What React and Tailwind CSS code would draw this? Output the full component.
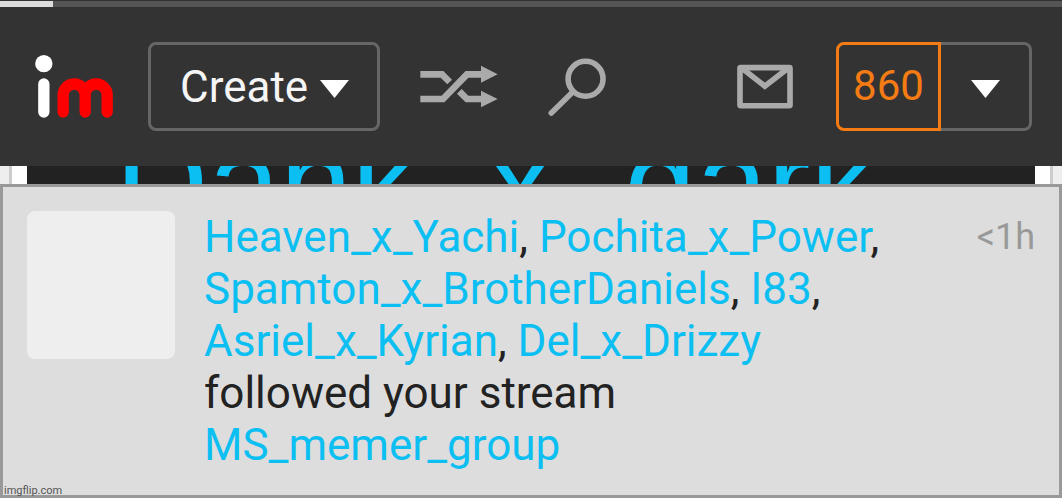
import React from 'react';

const Logo = () => (
  <svg viewBox="44 44 233 189" className="w-[78px] h-[63px]" fill="none" strokeWidth="34" strokeLinecap="round">
    <circle cx="70" cy="70" r="26" fill="#fff" />
    <path d="M70 131V215" stroke="#fff" />
    <path d="M128 215V164a33 33 0 0 1 66 0V215M194 164a33 33 0 0 1 66 0V215" stroke="#f00" />
  </svg>
);

const ShuffleIcon = () => (
  <svg viewBox="61 105 234 129" className="w-[78px] h-[43px]" fill="none" stroke="#aaa" strokeWidth="20">
    <path d="M62 133H127L150 156" />
    <path d="M62 207H130L202 133H245" />
    <path d="M179 184L202 207H245" />
    <path d="M244 107L294 133L244 158ZM244 182L294 207L244 232Z" fill="#aaa" stroke="none" />
  </svg>
);

const SearchIcon = () => (
  <svg viewBox="442 83 176 176" className="w-[58px] h-[58px]" fill="none" stroke="#aaa" strokeWidth="17">
    <circle cx="556" cy="146" r="53" />
    <path d="M517 186L452 250" strokeLinecap="round" />
  </svg>
);

const MailIcon = () => (
  <svg viewBox="111 193 169 134" className="w-14 h-[45px]" fill="none" stroke="#aaa" strokeWidth="17">
    <rect x="120" y="203" width="151" height="115" rx="2" />
    <path d="M130 208L195 259L261 208" />
  </svg>
);

const Caret = () => (
  <svg viewBox="0 0 29 18" className="w-[29px] h-[18px] mt-1" fill="#fff">
    <path d="M0 0H29L14.5 18Z" />
  </svg>
);

const Header = () => (
  <header className="bg-[#333]">
    <div className="h-[7px] bg-[#555] border-t border-[#333]">
      <div className="w-1/20 h-full bg-[#ddd]" />
    </div>
    <nav className="flex items-center pl-[35px] pr-[30px] py-[35px]">
      <a href="#home" aria-label="Home"><Logo /></a>
      <button className="ml-[35px] h-[89px] pl-[29px] pr-7 flex items-center gap-3 border-3 border-[#666] rounded-lg text-[44px] text-[#f5f5f5]">
        Create
        <Caret />
      </button>
      <button aria-label="Random" className="ml-10"><ShuffleIcon /></button>
      <button aria-label="Search" className="ml-[50px]"><SearchIcon /></button>
      <button aria-label="Messages" className="ml-auto"><MailIcon /></button>
      <div className="ml-[43px] h-[89px] flex">
        <button className="w-[105px] pb-0.5 border-3 border-[#f57c14] rounded-l-lg text-[42px] text-[#f57c14]">860</button>
        <button aria-label="Account menu" className="w-[91px] flex items-center justify-center border-3 border-l-0 border-[#666] rounded-r-lg">
          <Caret />
        </button>
      </div>
    </nav>
  </header>
);

const StreamTitle = () => (
  <div className="h-[18px] flex overflow-hidden bg-[#eee] px-[9px]">
    <div className="flex-1 min-w-0 border-x-3 border-[#ccc] bg-white px-[15px]">
      <h1 className="h-full bg-[#222] pl-[88px] font-['Liberation_Sans',sans-serif] text-[129px] leading-[32px] text-[#0bbff2] whitespace-nowrap">
        Dank_x_dark
      </h1>
    </div>
  </div>
);

const UserLink = ({ name }) => (
  <a href={`#${name}`} className="text-[#0bbff2]">{name}</a>
);

const Notification = () => (
  <section className="relative flex items-start p-6 bg-[#ddd] border-3 border-[#999]">
    <div className="size-[148px] shrink-0 rounded-lg bg-[#eee]" />
    <p className="ml-[29px] flex-1 text-[44px] leading-[52px] text-[#222]">
      <UserLink name="Heaven_x_Yachi" />, <UserLink name="Pochita_x_Power" />,{' '}
      <UserLink name="Spamton_x_BrotherDaniels" />, <UserLink name="I83" />,{' '}
      <UserLink name="Asriel_x_Kyrian" />, <UserLink name="Del_x_Drizzy" />{' '}
      followed your stream <UserLink name="MS_memer_group" />
    </p>
    <time className="ml-12 text-[36px] leading-[52px] text-[#999]">&lt;1h</time>
    <small className="absolute left-px -bottom-1 text-[11px] leading-4 text-[#555]">imgflip.com</small>
  </section>
);

const App = () => (
  <div className="min-h-screen overflow-hidden bg-white font-['Roboto',sans-serif]">
    <Header />
    <StreamTitle />
    <Notification />
  </div>
);

export default App;
